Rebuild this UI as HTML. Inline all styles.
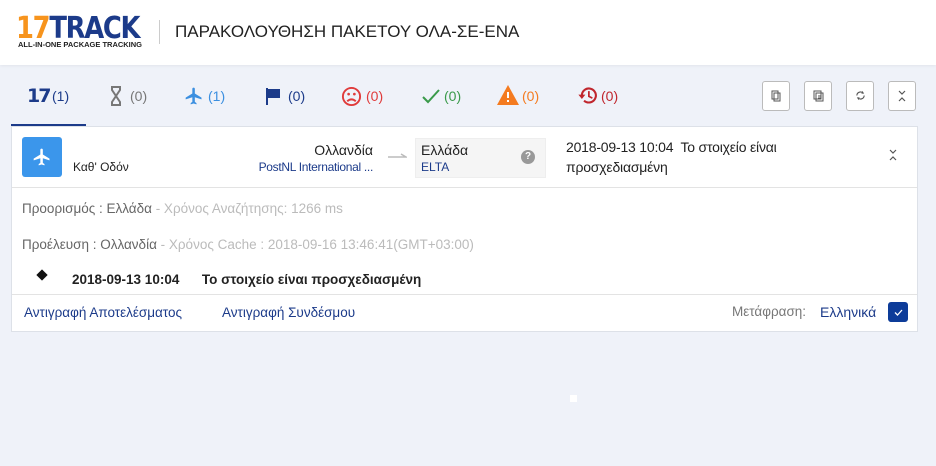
<!DOCTYPE html>
<html><head><meta charset="utf-8"><style>
*{box-sizing:border-box;margin:0;padding:0}
body{width:936px;height:466px;background:#eff2f9;font-family:"Liberation Sans","Noto Sans CJK SC",sans-serif;position:relative;overflow:hidden;color:#222}
.a{position:absolute;white-space:nowrap}
.hdr{position:absolute;left:0;top:0;width:936px;height:65px;background:#fff;box-shadow:0 1px 3px rgba(0,0,0,.06)}
.btn{position:absolute;top:81px;width:28px;height:30px;border:1px solid #bbb;border-radius:3px;background:#fff}
.card{position:absolute;left:11px;top:126px;width:907px;height:206px;background:#fff;border:1px solid #dde1e8}
.tab{font-size:14px;top:88px}
svg{position:absolute}
</style></head><body>
<div class="hdr">
 <div class="a" style="left:16px;top:11px;font-size:30px;font-weight:900;letter-spacing:-1.5px;font-family:'DejaVu Sans',sans-serif;transform:scaleX(0.86);transform-origin:left"><span style="color:#f7941d">17</span><span style="color:#1c3b8a">TRACK</span></div>
 <div class="a" style="left:18px;top:40px;font-size:7.5px;font-weight:bold;color:#222">ALL-IN-ONE PACKAGE TRACKING</div>
 <div class="a" style="left:159px;top:20px;width:1px;height:24px;background:#ccc"></div>
 <div class="a" style="left:175px;top:22px;font-size:17px;color:#222">ΠΑΡΑΚΟΛΟΥΘΗΣΗ ΠΑΚΕΤΟΥ ΟΛΑ-ΣΕ-ΕΝΑ</div>
</div>
<div class="a" style="left:27px;top:85px;font-size:19px;font-weight:900;color:#1c3b8a;letter-spacing:-2px;font-family:'DejaVu Sans',sans-serif">17</div>
<div class="a tab" style="left:52px;color:#1c3b8a">(1)</div>
<div class="a" style="left:11px;top:124px;width:75px;height:3px;background:#1c3b8a"></div>
<svg style="left:110px;top:86px" width="12" height="20" viewBox="0 0 12 20"><path d="M1 1h10M1 19h10M2 1v3l4 6-4 6v3M10 1v3L6 10l4 6v3" fill="none" stroke="#777" stroke-width="2"/></svg>
<div class="a tab" style="left:130px;color:#777">(0)</div>
<svg style="left:184px;top:86px" width="20" height="20" viewBox="0 0 24 24"><path fill="#3b8fe0" d="M21 16v-2l-8-5V3.5a1.5 1.5 0 0 0-3 0V9l-8 5v2l8-2.5V19l-2 1.5V22l3.5-1 3.5 1v-1.5L13 19v-5.5z"/></svg>
<div class="a tab" style="left:208px;color:#3b8fe0">(1)</div>
<svg style="left:265px;top:88px" width="16" height="17" viewBox="0 0 16 17"><path fill="#1c3b8a" d="M1 0h2v17H1zM3 1h12v9H3z"/></svg>
<div class="a tab" style="left:288px;color:#1c3b8a">(0)</div>
<svg style="left:341px;top:86px" width="21" height="21" viewBox="0 0 22 22"><circle cx="11" cy="11" r="9" fill="none" stroke="#e03b3b" stroke-width="2"/><circle cx="8" cy="8.5" r="1.4" fill="#e03b3b"/><circle cx="14" cy="8.5" r="1.4" fill="#e03b3b"/><path d="M6.5 16q4.5-4 9 0" fill="none" stroke="#e03b3b" stroke-width="2"/></svg>
<div class="a tab" style="left:366px;color:#e03b3b">(0)</div>
<svg style="left:422px;top:88px" width="18" height="16" viewBox="0 0 18 16"><path d="M1 9l5 5L17 2" fill="none" stroke="#3a9a4a" stroke-width="2"/></svg>
<div class="a tab" style="left:444px;color:#3a9a4a">(0)</div>
<svg style="left:497px;top:85px" width="22" height="20" viewBox="0 0 22 20"><path d="M11 0L22 20H0z" fill="#f47b20"/><path d="M10 7h2v6h-2zM10 15h2v2h-2z" fill="#fff"/></svg>
<div class="a tab" style="left:522px;color:#f47b20">(0)</div>
<svg style="left:577px;top:85px" width="22" height="21" viewBox="0 0 24 24"><path d="M5 12a8 8 0 1 1 2.5 5.8" fill="none" stroke="#c0262d" stroke-width="2.4"/><path d="M1 11h8l-4 5z" fill="#c0262d"/><path d="M13 7v6l4 2" fill="none" stroke="#c0262d" stroke-width="2"/></svg>
<div class="a tab" style="left:601px;color:#c0262d">(0)</div>
<div class="btn" style="left:762px"></div><div class="btn" style="left:804px"></div><div class="btn" style="left:846px"></div><div class="btn" style="left:888px"></div>
<svg style="left:771px;top:90px" width="10" height="12" viewBox="0 0 10 12"><path d="M1 1h6v8H1zM3 3h6v8H3z" fill="#fff" stroke="#555" stroke-width="1"/></svg>
<svg style="left:813px;top:90px" width="11" height="12" viewBox="0 0 11 12"><path d="M1 1h7v8H1zM3 3h7v8H3zM5 6h3M5 8h3" fill="#fff" stroke="#555" stroke-width="1"/></svg>
<svg style="left:855px;top:90px" width="11" height="11" viewBox="0 0 12 12"><path d="M2 6a4 4 0 0 1 7-2.5M10 6a4 4 0 0 1-7 2.5" fill="none" stroke="#555" stroke-width="1.2"/><path d="M8 1l2 3-3 0zM4 11l-2-3 3 0z" fill="#555"/></svg>
<svg style="left:898px;top:90px" width="8" height="12" viewBox="0 0 8 12"><path d="M1 1l3 3 3-3M1 11l3-3 3 3" fill="none" stroke="#555" stroke-width="1.2"/></svg>
<div class="card">
 <div class="a" style="left:10px;top:10px;width:40px;height:40px;background:#3b96eb;border-radius:3px"></div>
 <svg style="left:20px;top:20px" width="20" height="20" viewBox="0 0 24 24"><path fill="#fff" d="M21 16v-2l-8-5V3.5a1.5 1.5 0 0 0-3 0V9l-8 5v2l8-2.5V19l-2 1.5V22l3.5-1 3.5 1v-1.5L13 19v-5.5z"/></svg>
 <div class="a" style="left:61px;top:33px;font-size:12px">Καθ' Οδόν</div>
 <div class="a" style="right:544px;top:15px;font-size:14px">Ολλανδία</div>
 <div class="a" style="right:544px;top:33px;font-size:12px;color:#1c3b8a;letter-spacing:-0.3px">PostNL International ...</div>
 <svg style="left:376px;top:26px" width="19" height="6" viewBox="0 0 19 6"><path d="M0 4h18L13 1" fill="none" stroke="#bbb" stroke-width="1.5"/></svg>
 <div class="a" style="left:403px;top:11px;width:131px;height:40px;background:#f5f5f5;border:1px solid #eee"></div>
 <div class="a" style="left:409px;top:15px;font-size:14px">Ελλάδα</div>
 <div class="a" style="left:409px;top:33px;font-size:12px;color:#1c3b8a">ELTA</div>
 <div class="a" style="left:509px;top:23px;width:14px;height:14px;border-radius:50%;background:#999;color:#fff;font-size:10px;text-align:center;line-height:14px;font-weight:bold">?</div>
 <div class="a" style="left:554px;top:10px;font-size:14px;line-height:20px;white-space:normal;width:250px;letter-spacing:-0.2px">2018-09-13 10:04&nbsp; Το στοιχείο είναι προσχεδιασμένη</div>
 <svg style="left:877px;top:22px" width="8" height="12" viewBox="0 0 8 12"><path d="M1 1l3 3 3-3M1 11l3-3 3 3" fill="none" stroke="#555" stroke-width="1.2"/></svg>
 <div class="a" style="left:0;top:60px;width:905px;height:1px;background:#e3e3e3"></div>
 <div class="a" style="left:10px;top:74px;font-size:13.5px;color:#666">Προορισμός : Ελλάδα<span style="color:#bbb"> - Χρόνος Αναζήτησης: 1266 ms</span></div>
 <div class="a" style="left:10px;top:110px;font-size:13.5px;color:#666">Προέλευση : Ολλανδία<span style="color:#bbb"> - Χρόνος Cache : 2018-09-16 13:46:41(GMT+03:00)</span></div>
 <div class="a" style="left:26px;top:144px;width:8px;height:8px;background:#111;transform:rotate(45deg)"></div>
 <div class="a" style="left:60px;top:145px;font-size:13.5px;font-weight:bold">2018-09-13 10:04 &nbsp;&nbsp;&nbsp;&nbsp; Το στοιχείο είναι προσχεδιασμένη</div>
 <div class="a" style="left:0;top:167px;width:905px;height:1px;background:#e3e3e3"></div>
 <div class="a" style="left:12px;top:178px;font-size:13.5px;color:#1c3b8a">Αντιγραφή Αποτελέσματος</div>
 <div class="a" style="left:210px;top:178px;font-size:13.5px;color:#1c3b8a">Αντιγραφή Συνδέσμου</div>
 <div class="a" style="left:720px;top:177px;font-size:13.5px;color:#777">Μετάφραση:</div>
 <div class="a" style="left:808px;top:177px;font-size:14px;color:#1c3b8a">Ελληνικά</div>
 <div class="a" style="left:876px;top:175px;width:20px;height:20px;background:#0d3c99;border-radius:3px"></div>
 <svg style="left:882px;top:182px" width="9" height="7" viewBox="0 0 9 7"><path d="M1 3.5l2.5 2.5L8 1" fill="none" stroke="#fff" stroke-width="1.3"/></svg>
</div>
<div class="a" style="left:570px;top:395px;width:7px;height:7px;background:#fff"></div>
</body></html>
